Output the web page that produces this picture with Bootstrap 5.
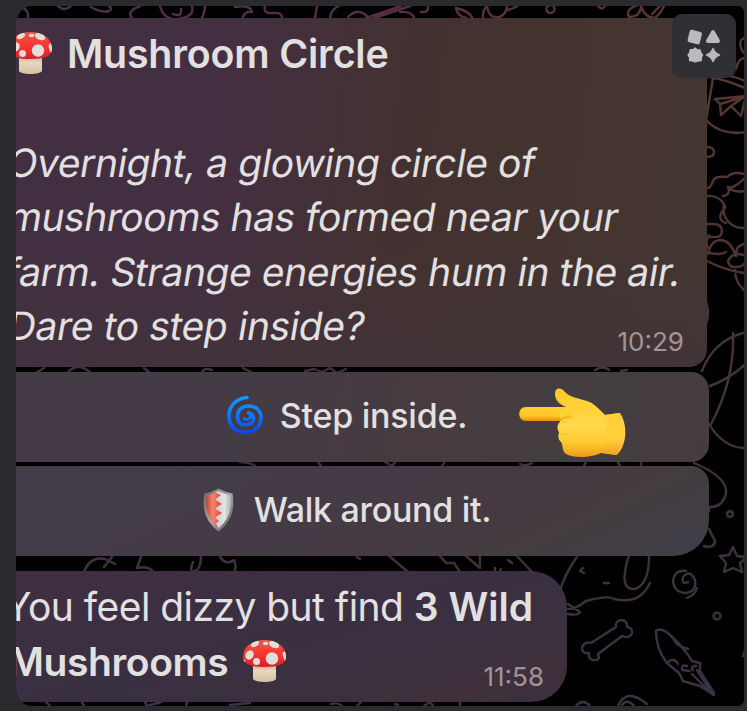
<!DOCTYPE html>
<html lang="en">
<head>
<meta charset="utf-8">
<meta name="viewport" content="width=device-width, initial-scale=1">
<title>Mushroom Circle</title>
<link href="https://cdn.jsdelivr.net/npm/bootstrap@5.3.0/dist/css/bootstrap.min.css" rel="stylesheet">
<style>
  body { background: #2b2b2f; color: #e2e0e1; font-family: Inter, "Liberation Sans", sans-serif; font-size: 39px; line-height: 54.6px; }
  .chat { height: 700px; margin: 6px 3px 5px 16px; padding-top: 11.5px; background: #000; border-radius: 16px 6px 6px 16px; }
  .doodles { z-index: 0; }
  .bubble, .choice { position: relative; z-index: 1; white-space: nowrap; }
  .bubble { padding: 9px 24px 0 23px; margin-left: -31px; }
  .story { width: 722px; height: 349.5px; border-radius: 0 0 18px 0; background: linear-gradient(to top, #40333ab0 0, #40333a00 35%), linear-gradient(97deg, #422f43 0, #432f41 32%, #43312f 60%, #43342f 75%, #443630 100%); }
  .result { width: 582px; height: 131px; margin-top: 15px; border-radius: 0 36px 36px 0; background: linear-gradient(165deg, #412e40 0, #3b2f42 38%, #3a3040 65%, #3f303a 88%, #3b3040 100%); }
  .choice { width: 724px; margin-left: -31px; height: 90px; padding-bottom: 3px; font-size: 34px; font-weight: 500; color: #e2e0e1; border: 0; background: linear-gradient(100deg, #443b48 0, #453b45 40%, #483b41 62%, #443e40 80%, #443c41 100%); border-radius: 0 18px 18px 0; }
  .choice-first { margin-top: 5px; }
  .choice-last { margin-top: 4px; border-radius: 0 18px 36px 0; background: linear-gradient(155deg, #433c4a 0, #443b47 40%, #463a42 64%, #433d41 80%, #413e48 100%); }
  .heading { font-size: 39.3px; font-weight: 600; letter-spacing: -.18px; }
  .heading svg { margin: -2px 14px 0 0; }
  .slant { margin-left: -2px; }
  .slant > div { transform: skewX(-9.5deg); transform-origin: 0 41px; }
  .l1 { letter-spacing: -.45px; } .l2 { letter-spacing: -.46px; } .l3 { letter-spacing: -.45px; margin-left: -2px; } .l4 { letter-spacing: -.38px; }
  .feel { letter-spacing: -.54px; margin-left: -3px; }
  .wild { font-weight: 600; letter-spacing: 0; }
  .found { font-weight: 600; letter-spacing: -.4px; }
  .found svg { margin: 0 0 1px 14px; }
  .stamp { position: absolute; right: 23px; bottom: 9px; font-size: 26px; line-height: 32px; color: #a0959b; }
  .shapes { top: 8px; right: 8px; width: 64px; height: 64px; border-radius: 10px; background: #303034; z-index: 3; }
  .hand { left: 502px; top: 381px; z-index: 2; }
  .swirl { margin-bottom: 2px; }
  .step { letter-spacing: -.25px; margin-left: 17px; } .walk { letter-spacing: -.3px; margin-left: 20px; }
</style>
</head>
<body class="m-0 overflow-hidden">
<main class="chat position-relative overflow-hidden">
  <svg class="doodles position-absolute top-0 start-0" width="728" height="700" viewBox="16 6 728 700" fill="none" stroke="url(#ink)" stroke-width="2.4" stroke-linecap="round" stroke-linejoin="round" aria-hidden="true">
    <defs>
      <linearGradient id="ink" gradientUnits="userSpaceOnUse" x1="100" y1="706" x2="560" y2="0"><stop offset="0" stop-color="#43304b"/><stop offset=".5" stop-color="#3e3039"/><stop offset="1" stop-color="#55372f"/></linearGradient>
      <linearGradient id="inkTop" gradientUnits="userSpaceOnUse" x1="16" y1="0" x2="744" y2="0"><stop offset="0" stop-color="#4b3152"/><stop offset=".5" stop-color="#552f42"/><stop offset="1" stop-color="#5a352f"/></linearGradient>
      <linearGradient id="inkSide" gradientUnits="userSpaceOnUse" x1="0" y1="30" x2="0" y2="706"><stop offset="0" stop-color="#59372f"/><stop offset=".35" stop-color="#4b3433"/><stop offset=".65" stop-color="#40323b"/><stop offset="1" stop-color="#393144"/></linearGradient>
    </defs>
    <g stroke="url(#inkTop)">
      <path d="M16 18q4-12 9-9 4 4 3 9M58 6q7 6 13 0M91 7q10 6 18 4 4-2 0-5M140 6q-14 5-8 12M160 6q4 15 18 13 17-2 14-13M173 14q9 4 8-5M205 6q0 6-3 12M235 7q15-3 17 5-7-1-9 5M265 6q-2 8 8 7 9-1 9 5M317 6l-2 12M339 6q-8 3-9 12M348 17q10-10 20 0M366 18l35-12M374 18l36-12"/>
      <path d="M400 12q12-1 14 6M421 12q8 1 7-6M456 8q15 4 16 10M456 8q1 8 10 10M487 6q-5 5-4 12M487 6q2 13 12 11 7-2 8-11M508 10q10-3 9-5M550 5a4 4 0 1 0 1 8 4 4 0 0 0-1-8M598 6q4 5 7 0M638 5q-13 4-9 12 10 0 12-9M641 6q4 12 14 12 5-4 9-12M652 14l8-8"/>
    </g>
    <g stroke="url(#inkSide)">
      <path d="M747 38q-9 0-6 10 2 5 5 6M736 69q2-10 8-11M709 77q15 2 36 11M714 77q14-4 31 4M713 78l-7 42q15 16 40 12M715 99l31-3-5 20-10-10-10 9-1-11zM720 104l24-7-13 9M707 147q7 0 7 5t-7 5M744 174q-11-3-17 3-9-1-13 2-3 8-6 9M744 179q-12 11-16 8 3 8-5 9M728 188q8 5 16 3"/>
      <path d="M707 196q13-1 18 10M724 205a19 19 0 0 0 20 23M725 208q-10 11 1 15M706 224h7q9 0 9 7t-9 6h-7M708 254q3-14 13-14 10 1 15 16M709 249q-5-5 0-14M706 252q14 4 20 0M744 244q-9 3-7 9M728 261q4-9 16-6M728 261q1 7 9 6 5 0 7-3M707 261q17 9 37 12M735 270q0 12 9 20"/>
      <path d="M747 332q-33 7-45 39M710 386q19-7 37-23M733 333q2 47-23 93M709 424q15 25 38 24M694 463q38 16 31 34-4 10-15 10l-2 6M709 529l6 12q-1 8-11 5"/>
      <path d="M706 302q4 11 0 22z" fill="#42332f"/>
      <circle cx="730" cy="514" r="2.8"/><circle cx="717" cy="616" r="3.5"/>
      <path d="M733 547l4 9 10 1-7 6 2 9-9-4-9 4 2-9-6-7 9-1zM688 582q-7 3-5-5 7-8 12 3 2 12-10 13-11-1-12-12 2-12 13-10M697 588q-2 7-10 10"/>
      <path d="M591 643l25-16q-1-7 6-7 6 1 5 7 6 1 5 6-2 6-10 3l-24 18q3 7-5 6-5-1-4-7-7 1-7-5 2-7 9-5zM667 663q-11-14-11-32 6-5 17 7 12 11 19 23l8 2v8l14 22M667 663l12 10 4 8 17 5 14 9M673 637q2 9 15 12M668 662q6-5 10 2M687 666q-6-2-5 4l8 1M693 670q-3-4 3-4M692 674l16 16M697 670l16 25"/>
      <path d="M747 646l-4 10h4M576 706q7-8 14 0M618 706q8-19 29-2M622 705q5-7 12 1"/>
    </g>
    <path d="M578 555q-13 19-18 35M630 552q-13 39 5 37 15-5 14-36M568 609q8 0 18-8 22-6 28-2 26 6 36-16M568 604l12 8q-2 4-12 2M583 568l-3 3 4 2M604 583h5M388 555l20 17M440 556l6 7h8l8 12M466 556l14 12v-12M508 560l4 3M516 555l16 17M495 571v-3M500 571l1-2"/>
    <path d="M84 572q6-16 21-13l10 5M112 557l-8 10M141 557l-4 11q12-3 17 5M193 562q-5 13 4 8 4-4 4-14M220 557q6 9 14 3 3 7 0 12M357 557l3 2"/>
    <path d="M36 373l8-5M68 372q10-10 22 0M144 368l5 4M202 373q1-6 10-3M243 368l10 5M305 371l9-2 8 3 8-4 7 5 9-4M595 370q8-5 14 0M621 371l6-1M240 462q10 0 15 4M318 462l3 4M385 462l7 4 4-5M442 466l2-3M520 464q6 3 12-1M584 466l2-4M618 462l2 4M641 462v4M46 702l4 4M82 702l2 4M145 702l2 4 14-4M187 702l-1 4M230 705l20-2M331 704q7-2 11 2M361 702l-4 4M395 704l3 1M424 706l6-4 3 4M460 702v4"/>
  </svg>

  <section class="bubble story">
    <div class="heading d-flex align-items-center">
      <svg width="45" height="44" viewBox="0 0 45 44" aria-hidden="true">
        <defs>
          <linearGradient id="cap" x1="0" y1="0" x2="0" y2="1"><stop offset="0" stop-color="#e55a4b"/><stop offset=".45" stop-color="#fb3934"/><stop offset="1" stop-color="#d91f27"/></linearGradient>
          <linearGradient id="stem" x1="0" y1="0" x2="0" y2="1"><stop offset="0" stop-color="#b8a18b"/><stop offset=".35" stop-color="#e8d7bd"/><stop offset="1" stop-color="#d5c19e"/></linearGradient>
          <clipPath id="capEdge"><path d="M1 18C1 7 11 1 22.500 1S44 7 44 18c0 7-8 10-21.500 10S1 25 1 18z"/></clipPath>
          <g id="mushroom">
            <path d="M11 25h23v15c-2 4-21 4-23 0z" fill="url(#stem)"/>
            <path d="M1 18C1 7 11 1 22.500 1S44 7 44 18c0 7-8 10-21.500 10S1 25 1 18z" fill="url(#cap)"/>
            <g fill="#e5ddd7" clip-path="url(#capEdge)"><circle cx="30" cy="19.500" r="6.200"/><circle cx="14.500" cy="22.500" r="3.500"/><ellipse cx="7.500" cy="16" rx="4" ry="4.800" transform="rotate(30 7.500 16)"/><ellipse cx="32" cy="5.500" rx="5.500" ry="3.200" transform="rotate(25 32 5.500)"/><ellipse cx="13" cy="5" rx="4.500" ry="2.500" transform="rotate(-30 13 5)"/><ellipse cx="23.500" cy="4.500" rx="2.800" ry="1.800"/><ellipse cx="43" cy="17" rx="2" ry="4.500" transform="rotate(-15 43 17)"/><circle cx="2" cy="22" r="1.500"/></g>
          </g>
        </defs>
        <use href="#mushroom"/>
      </svg>
      <span>Mushroom Circle</span>
    </div>
    <br>
    <div class="slant">
      <div class="l1">Overnight, a glowing circle of</div>
      <div class="l2">mushrooms has formed near your</div>
      <div class="l3">farm. Strange energies hum in the air.</div>
      <div class="l4">Dare to step inside?</div>
    </div>
    <time class="stamp">10:29</time>
  </section>

  <button type="button" class="choice choice-first d-flex align-items-center justify-content-center">
    <svg class="swirl" width="36" height="40" viewBox="0 0 36 40" fill="none" aria-hidden="true">
      <defs><linearGradient id="swirl" gradientUnits="userSpaceOnUse" x1="0" y1="0" x2="0" y2="40"><stop offset="0" stop-color="#139dff"/><stop offset=".5" stop-color="#087bff"/><stop offset="1" stop-color="#083cff"/></linearGradient></defs>
      <path d="M20 2.500C9 3.500 2 11 2 21s6.500 16.500 16 16.500S34 31 34 23 28.500 11 21.500 11 10.500 15.500 10.500 21.500s3.500 8.500 8.500 8.500 7.500-3.500 7.500-6.500-2-5.500-5-5.500" stroke="url(#swirl)" stroke-width="3.600" stroke-linecap="round" stroke-linejoin="round"/>
      <path d="M22 18q3 4-1 6.500-3 1-4-1.500" stroke="url(#swirl)" stroke-width="2.600" stroke-linecap="round"/>
    </svg>
    <span class="step">Step inside.</span>
  </button>

  <button type="button" class="choice choice-last d-flex align-items-center justify-content-center">
    <svg width="31" height="44" viewBox="0 0 31 44" aria-hidden="true">
      <defs>
        <linearGradient id="rim" x1="0" y1="0" x2="1" y2="1"><stop offset="0" stop-color="#65605f"/><stop offset=".5" stop-color="#aaa9a9"/><stop offset="1" stop-color="#555"/></linearGradient>
        <linearGradient id="red" x1="0" y1="0" x2="1" y2="0"><stop offset="0" stop-color="#b84438"/><stop offset=".4" stop-color="#f7826c"/><stop offset="1" stop-color="#dc4935"/></linearGradient>
        <linearGradient id="silver" x1="0" y1="0" x2="1" y2="0"><stop offset="0" stop-color="#c8cbd0"/><stop offset=".6" stop-color="#e4e5e6"/><stop offset="1" stop-color="#aeb0b3"/></linearGradient>
      </defs>
      <path d="M15.500.5Q22 4 29.500 5.500 34 30 15.500 43.500-3 30 1.500 5.500 9 4 15.500.5z" fill="url(#rim)"/>
      <path d="M12 4l3.500-1Q21 6 27.500 7.500 30.500 28 15.500 40l-3-4z" fill="url(#silver)"/>
      <path d="M14 3.800Q9 6.500 3.500 7.500.5 28 15.500 40l-2.500-4.500 3-2.500-4-3.500 7-4.500-7-4.500 7-4.500-7-4.500 6-4.500-5-2z" fill="url(#red)"/>
    </svg>
    <span class="walk">Walk around it.</span>
  </button>

  <section class="bubble result">
    <div><span class="feel">You feel dizzy but find </span><span class="wild">3 Wild</span></div>
    <div class="found d-flex align-items-center"><span>Mushrooms</span><svg width="45" height="44" viewBox="0 0 45 44" aria-hidden="true"><use href="#mushroom"/></svg></div>
    <time class="stamp">11:58</time>
  </section>

  <svg class="hand position-absolute" width="109" height="73" viewBox="518 387 109 73" aria-hidden="true">
    <defs>
      <linearGradient id="skin" x1="0" y1="0" x2="0" y2="1"><stop offset="0" stop-color="#ffca25"/><stop offset=".55" stop-color="#ffd84c"/><stop offset=".8" stop-color="#ffca2e"/><stop offset="1" stop-color="#ec9818"/></linearGradient>
      <linearGradient id="finger" gradientUnits="userSpaceOnUse" x1="0" y1="407" x2="0" y2="421"><stop offset="0" stop-color="#ffcd2e"/><stop offset=".6" stop-color="#ffc927"/><stop offset="1" stop-color="#e6900f"/></linearGradient>
      <linearGradient id="cuff" x1="0" y1="0" x2="0" y2="1"><stop offset="0" stop-color="#ffcf38"/><stop offset=".6" stop-color="#ffd13c"/><stop offset="1" stop-color="#f0a31e"/></linearGradient>
    </defs>
    <path d="M557 407.500l9-.5c-7-3-11-8-11-13 0-6 5-7 9-3 5 6 13 7 23 10 7 2 13 9 18 14l15-2c8 12 7 32-3 42l-16-2c-7 4-27 6-35 1-5-4-2-10-6-13-3-4-1-7-1-9-3-4-1-9 1-10z" fill="url(#skin)"/>
    <path d="M572 407h-46c-9 0-9 14 0 14h33l1 0q4-3 12-3z" fill="url(#finger)"/>
    <path d="M561 420q5-8 20-8v-5h-14l-8 4z" fill="#ffd03a"/>
    <path d="M566 406.500q-8-3-10.500-9M561 422q5-1 8 1M560 434q4-1 6 1M562 445q4-1 6 0" fill="none" stroke="#f5ae1c" stroke-opacity=".4" stroke-width="1.500"/>
    <path d="M605 415l14-2c8 12 7 32-3 42l-14-2q7-19 3-38z" fill="url(#cuff)"/>
  </svg>

  <button type="button" class="shapes position-absolute border-0 p-0 d-flex align-items-center justify-content-center" aria-label="Open visual tools">
    <svg width="36" height="36" viewBox="0 0 36 36" fill="#b9bac0" stroke="#b9bac0" stroke-width="4" stroke-linejoin="round" aria-hidden="true">
      <path d="M5.600 3.800L14 6l-2.200 8.400L3.600 12.200zM27 4.200l5 8.800H22z"/>
      <path stroke-width="1.500" d="M9 20l2.200 1.800 2.900.1.600 2.800 1.800 2.300-1.200 2.500-.1 2.900-2.900.5L9 33.800l-2.400-1-2.900-.4v-2.900L2.200 27l1.700-2.400.4-2.800 2.900-.1zM27 20.500q1.700 4.800 6.500 6.500-4.800 1.700-6.500 6.500-1.700-4.800-6.500-6.500 4.800-1.700 6.500-6.500z"/>
    </svg>
  </button>
</main>
</body>
</html>
